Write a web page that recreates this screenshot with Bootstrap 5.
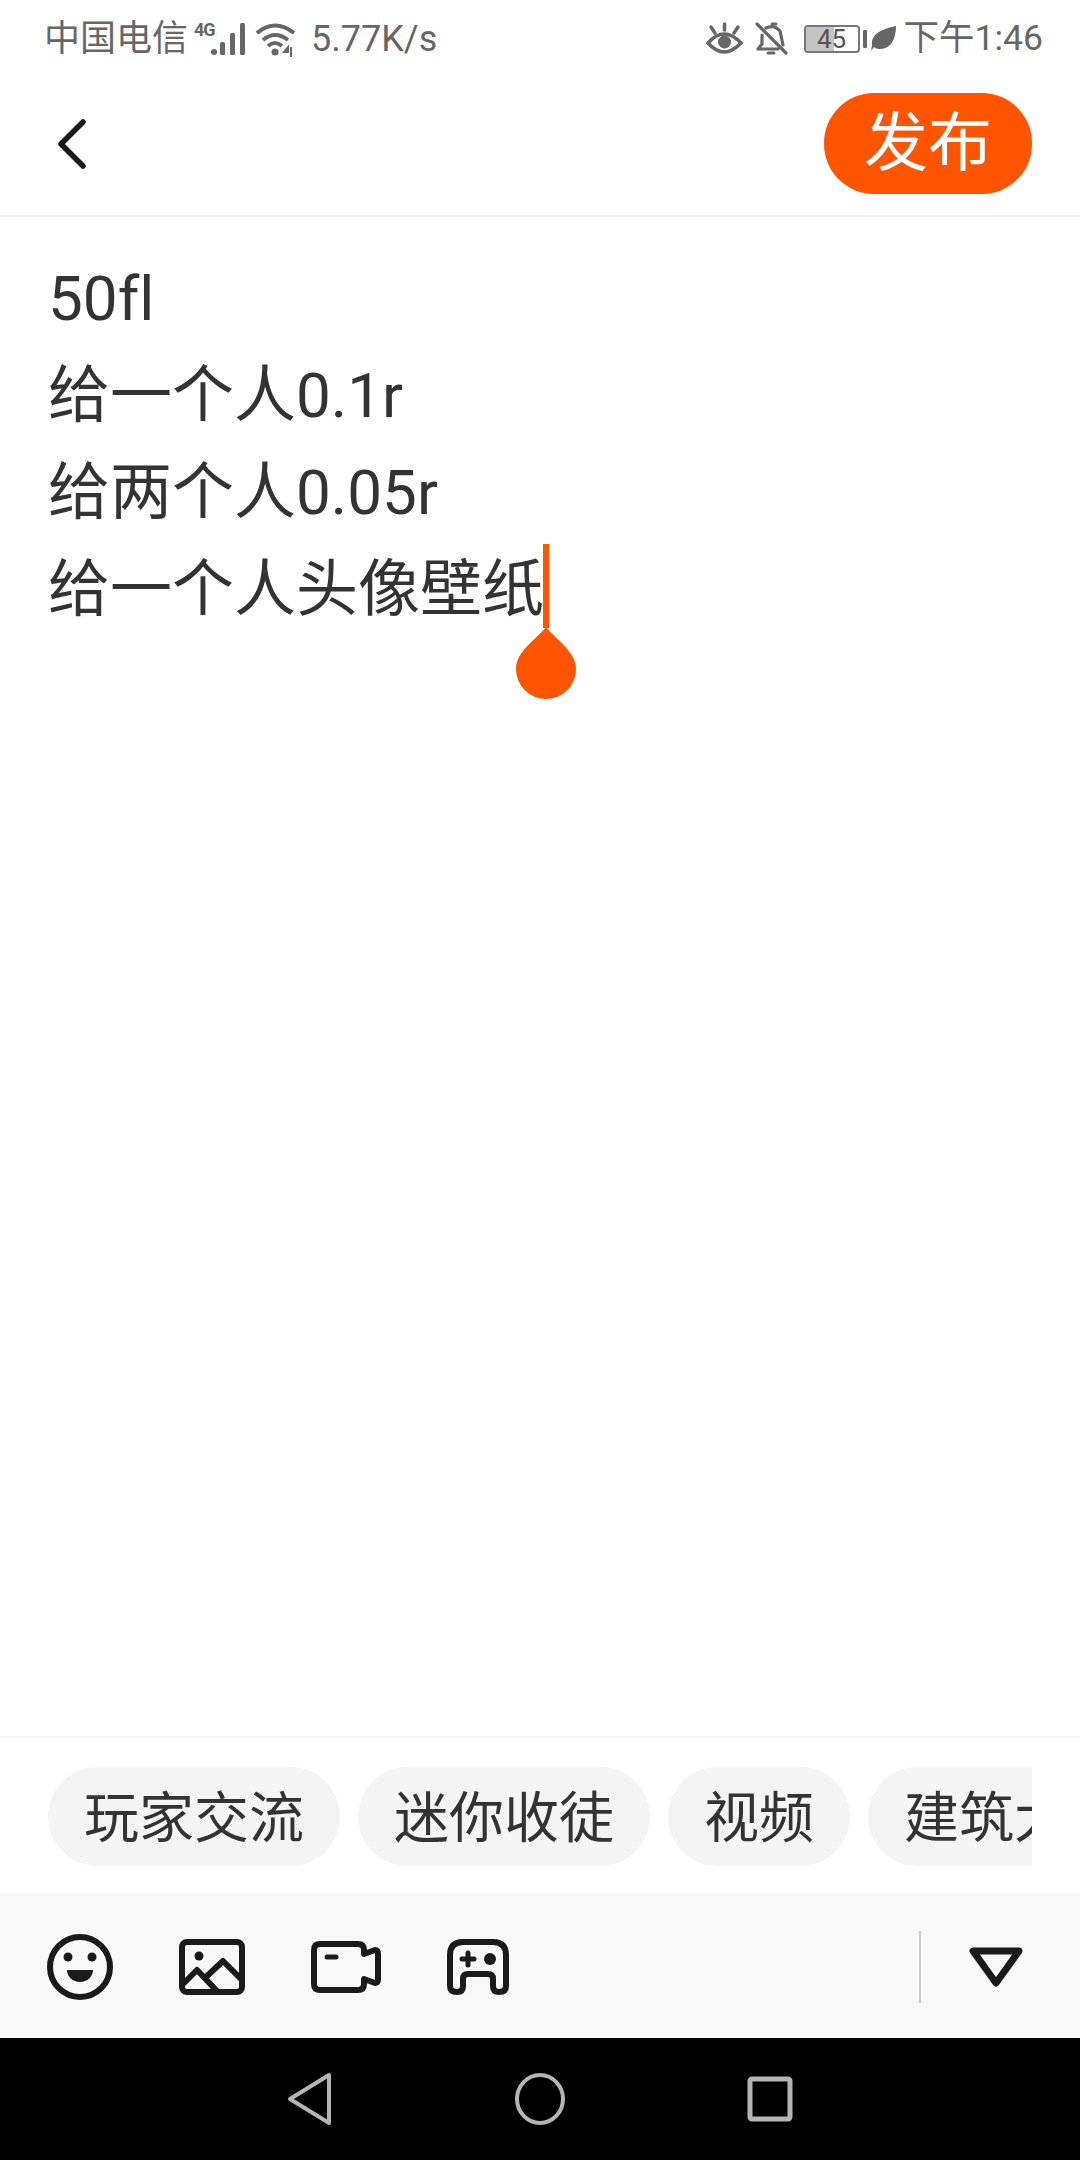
<!DOCTYPE html>
<html lang="zh">
<head>
<meta charset="utf-8">
<title>发布</title>
<link href="https://cdn.jsdelivr.net/npm/bootstrap@5.3.0/dist/css/bootstrap.min.css" rel="stylesheet">
<style>
html,body{margin:0;height:2160px;}
body{width:1080px;background:#fff;font-family:Roboto,"Noto Sans CJK SC",sans-serif;font-variant-ligatures:none;overflow:hidden;}
svg{display:block;flex:none;}
.status-bar{height:74px;padding:3px 37px 0 44px;color:#666;font-size:36px;line-height:1;}
.status-speed{margin-left:14px;}
.net-type{font-size:18px;font-weight:700;line-height:1;letter-spacing:-1px;margin:-18px 0 0 6px;width:0;}
.sig-icon{margin-left:16px;}
.wifi-icon{margin-left:9px;}
.bell-icon{margin-left:12px;}
.batt-wrap{margin-left:15px;}
.leaf-icon{margin-left:4px;}
.time-text{margin-left:7px;font-size:35.500px;}
.batt-box{width:56px;height:28px;border:2px solid #777;border-radius:4px;position:relative;overflow:hidden;font-size:26px;}
.batt-level{background:#c4c4c4;}
.batt-num{position:absolute;inset:0;line-height:24px;color:#555;}
.batt-tip{width:4px;height:18px;background:#666;border-radius:1px;margin-left:3px;}
.top-bar{height:143px;border-bottom:2px solid #f2f2f2;padding:0 48px 2px 57px;}
.publish-btn{width:208px;height:101px;border-radius:50px;background:#ff5500;border:0;color:#fff;font-size:64px;line-height:1;padding:0;}
.publish-btn:hover{background:#ff5500;color:#fff;}
.editor{padding:33px 48px 0;color:#333;font-size:62px;line-height:97px;}
.caret-mark{display:inline-block;position:relative;width:6px;height:84px;margin-left:-1px;background:#ff5500;vertical-align:-17px;}
.caret-drop{position:absolute;left:-28px;top:83px;}
.tag-row{border-top:2px solid #f4f4f4;padding:29px 48px 27px;}
.tag-track{overflow:hidden;gap:18px;}
.tag-pill{flex:none;height:99px;line-height:103px;padding:0 36px;border-radius:50px;background:#f4f4f4;color:#333;font-size:55px;}
.tool-bar{height:145px;background:#f8f8f8;padding:3px 56px 0 47px;}
.tool-gap{gap:66px;}
.tool-sep{width:2px;height:72px;background:#c9c9c9;margin-right:47px;}
.nav-keys{height:122px;background:#000;}
.key-back{margin-left:287px;}
.key-next{margin-left:182px;}
</style>
</head>
<body class="d-flex flex-column">

<div class="status-bar d-flex align-items-center justify-content-between">
  <div class="d-flex align-items-center">
    <span>中国电信</span>
    <span class="net-type">4G</span>
    <svg class="sig-icon" width="36" height="34" viewBox="0 0 36 34" fill="#666"><rect x="1" y="27" width="6" height="6" rx="3"/><rect x="10" y="20" width="5" height="13" rx="1.5"/><rect x="20" y="11" width="5" height="22" rx="1.5"/><rect x="30" y="1" width="5" height="32" rx="1.5"/></svg>
    <svg class="wifi-icon" width="42" height="36" viewBox="0 0 42 36" fill="none" stroke="#666" stroke-width="4"><path d="M2 12Q20-3 39 12"/><path d="M8 19Q20 9 33 19"/><path d="M13 25Q20 19 27 25"/><circle cx="20" cy="31" r="3.5" fill="#666" stroke="none"/><path d="M33 26l-4 5h4zM36 26v10" stroke-width="2" fill="#666"/></svg>
    <span class="status-speed">5.77K/s</span>
  </div>
  <div class="d-flex align-items-center">
    <svg width="37" height="33" viewBox="0 0 37 33" fill="none" stroke="#666" stroke-width="3.5" stroke-linecap="round"><path d="M2 21Q18 3 35 21Q18 39 2 21Z"/><circle cx="18.500" cy="20" r="6.500" fill="#666" stroke="none"/><path d="M18.500 2v6M5 5l4 6M32 5l-4 6"/></svg>
    <svg class="bell-icon" width="34" height="34" viewBox="0 0 34 34" fill="none" stroke="#666" stroke-width="3.200" stroke-linecap="round"><path d="M3 27h20M3 27l4-5V13M11 6q8-4 14 3l3 14M2 2l29 29"/><path d="M13 31h6" stroke-width="3"/><path d="M17 2h4" stroke-width="3"/></svg>
    <div class="batt-wrap d-flex align-items-center">
      <div class="batt-box d-flex">
        <div class="batt-level" style="width:55%"></div>
        <div class="batt-num text-center">45</div>
      </div>
      <div class="batt-tip"></div>
    </div>
    <svg class="leaf-icon" width="26" height="26" viewBox="0 0 26 26" fill="#666"><path d="M25 0C25 14 19 24 8 23Q5 23 3 21L0 25 1 19C0 7 12 3 25 0Z"/></svg>
    <span class="time-text">下午1:46</span>
  </div>
</div>

<div class="top-bar d-flex align-items-center justify-content-between">
  <svg width="30" height="50" viewBox="0 0 30 50" fill="none" stroke="#1a1a1a" stroke-width="5.500" stroke-linecap="round" stroke-linejoin="round"><path d="M26 3L4 25l22 22"/></svg>
  <button type="button" class="btn publish-btn">发布</button>
</div>

<div class="editor flex-grow-1">
  <div>50fl</div>
  <div>给一个人0.1r</div>
  <div>给两个人0.05r</div>
  <div>给一个人头像壁纸<span class="caret-mark"><svg class="caret-drop" width="62" height="72" viewBox="0 0 62 72" fill="#ff5500"><path d="M31 0C40 12 61 24 61 42A30 30 0 0 1 1 42C1 24 22 12 31 0Z"/></svg></span></div>
</div>

<div class="tag-row">
  <div class="tag-track d-flex">
    <span class="tag-pill">玩家交流</span>
    <span class="tag-pill">迷你收徒</span>
    <span class="tag-pill">视频</span>
    <span class="tag-pill">建筑大师</span>
  </div>
</div>

<div class="tool-bar d-flex align-items-center justify-content-between">
  <div class="d-flex align-items-center tool-gap">
    <svg width="66" height="68" viewBox="0 0 66 68" fill="none" stroke="#1a1a1a" stroke-width="6"><circle cx="33" cy="34" r="30"/><circle cx="21" cy="24" r="4.500" fill="#1a1a1a" stroke="none"/><circle cx="45" cy="24" r="4.500" fill="#1a1a1a" stroke="none"/><path d="M20 37H46C46 44 40 49 33 49S20 44 20 37Z" fill="#1a1a1a" stroke="none"/></svg>
    <svg width="66" height="56" viewBox="0 0 66 56" fill="none" stroke="#1a1a1a" stroke-width="6" stroke-linejoin="round"><rect x="3" y="3" width="60" height="50" rx="5"/><circle cx="20" cy="17" r="4.500" fill="#1a1a1a" stroke="none"/><path d="M4 45L18 31 37 51M27 38L44 22 62 40" stroke-linecap="round"/></svg>
    <svg width="70" height="52" viewBox="0 0 70 52" fill="none" stroke="#1a1a1a" stroke-width="6" stroke-linejoin="round"><path d="M9 3H47Q53 3 53 9V13L64 9Q67 9 67 13V38Q67 42 64 42L53 38V43Q53 49 47 49H9Q3 49 3 43V9Q3 3 9 3Z"/><path d="M16 16H25" stroke-width="5" stroke-linecap="round"/></svg>
    <svg width="62" height="56" viewBox="0 0 62 56" fill="none" stroke="#1a1a1a" stroke-width="6" stroke-linejoin="round"><path d="M16 3H46Q59 3 59 16V47Q59 53 52 53 46 53 46 47V40Q46 35 41 35H21Q16 35 16 40V47Q16 53 10 53 3 53 3 47V16Q3 3 16 3Z"/><path d="M15 20H27M21 14V26" stroke-width="5" stroke-linecap="round"/><circle cx="43" cy="20" r="6" fill="#1a1a1a" stroke="none"/></svg>
  </div>
  <div class="d-flex align-items-center">
    <div class="tool-sep"></div>
    <svg width="56" height="40" viewBox="0 0 56 40" fill="none" stroke="#1a1a1a" stroke-width="7" stroke-linejoin="round"><path d="M5 4H51L28 36Z"/></svg>
  </div>
</div>

<div class="nav-keys d-flex align-items-center">
  <svg class="key-back" width="46" height="54" viewBox="0 0 46 54" fill="none" stroke="#b5b5b5" stroke-width="4" stroke-linejoin="round"><path d="M42 3V51L3 27Z"/></svg>
  <svg class="key-next" width="50" height="52" viewBox="0 0 50 52" fill="none" stroke="#b5b5b5" stroke-width="4"><ellipse cx="25" cy="26" rx="23" ry="24"/></svg>
  <svg class="key-next" width="46" height="46" viewBox="0 0 46 46" fill="none" stroke="#b5b5b5" stroke-width="5" stroke-linejoin="round"><rect x="3" y="3" width="40" height="40" rx="2"/></svg>
</div>

</body>
</html>
